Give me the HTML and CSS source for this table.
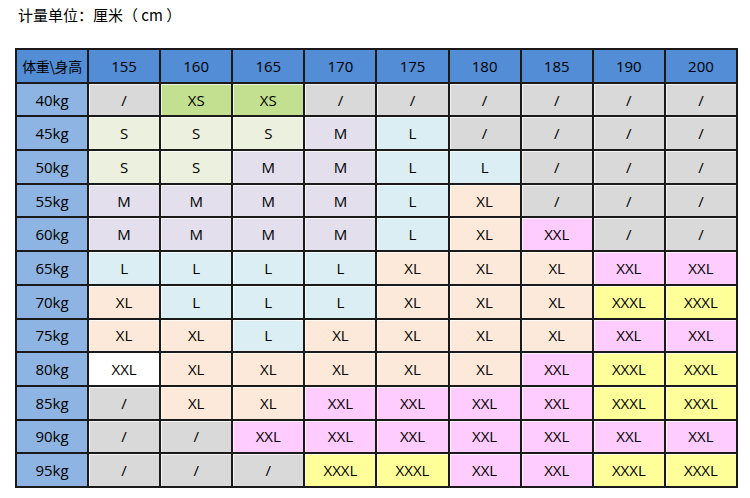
FILE: index.html
```html
<!DOCTYPE html>
<html lang="zh-CN">
<head>
<meta charset="utf-8">
<title>尺码表</title>
<link rel="stylesheet" href="styles.css">
</head>
<body>
<div class="page">
  <div class="unit">计量单位：厘米（ cm ）</div>
  <table class="size-table">
    <thead>
      <tr>
        <th class="corner">体重\身高</th>
        <th>155</th><th>160</th><th>165</th><th>170</th><th>175</th><th>180</th><th>185</th><th>190</th><th>200</th>
      </tr>
    </thead>
    <tbody>
      <tr><th>40kg</th><td class="na">/</td><td class="xs">XS</td><td class="xs">XS</td><td class="na">/</td><td class="na">/</td><td class="na">/</td><td class="na">/</td><td class="na">/</td><td class="na">/</td></tr>
      <tr><th>45kg</th><td class="s">S</td><td class="s">S</td><td class="s">S</td><td class="m">M</td><td class="l">L</td><td class="na">/</td><td class="na">/</td><td class="na">/</td><td class="na">/</td></tr>
      <tr><th>50kg</th><td class="s">S</td><td class="s">S</td><td class="m">M</td><td class="m">M</td><td class="l">L</td><td class="l">L</td><td class="na">/</td><td class="na">/</td><td class="na">/</td></tr>
      <tr><th>55kg</th><td class="m">M</td><td class="m">M</td><td class="m">M</td><td class="m">M</td><td class="l">L</td><td class="xl">XL</td><td class="na">/</td><td class="na">/</td><td class="na">/</td></tr>
      <tr><th>60kg</th><td class="m">M</td><td class="m">M</td><td class="m">M</td><td class="m">M</td><td class="l">L</td><td class="xl">XL</td><td class="xxl">XXL</td><td class="na">/</td><td class="na">/</td></tr>
      <tr><th>65kg</th><td class="l">L</td><td class="l">L</td><td class="l">L</td><td class="l">L</td><td class="xl">XL</td><td class="xl">XL</td><td class="xl">XL</td><td class="xxl">XXL</td><td class="xxl">XXL</td></tr>
      <tr><th>70kg</th><td class="xl">XL</td><td class="l">L</td><td class="l">L</td><td class="l">L</td><td class="xl">XL</td><td class="xl">XL</td><td class="xl">XL</td><td class="xxxl">XXXL</td><td class="xxxl">XXXL</td></tr>
      <tr><th>75kg</th><td class="xl">XL</td><td class="xl">XL</td><td class="l">L</td><td class="xl">XL</td><td class="xl">XL</td><td class="xl">XL</td><td class="xl">XL</td><td class="xxl">XXL</td><td class="xxl">XXL</td></tr>
      <tr><th>80kg</th><td class="blank">XXL</td><td class="xl">XL</td><td class="xl">XL</td><td class="xl">XL</td><td class="xl">XL</td><td class="xl">XL</td><td class="xxl">XXL</td><td class="xxxl">XXXL</td><td class="xxxl">XXXL</td></tr>
      <tr><th>85kg</th><td class="na">/</td><td class="xl">XL</td><td class="xl">XL</td><td class="xxl">XXL</td><td class="xxl">XXL</td><td class="xxl">XXL</td><td class="xxl">XXL</td><td class="xxxl">XXXL</td><td class="xxxl">XXXL</td></tr>
      <tr><th>90kg</th><td class="na">/</td><td class="na">/</td><td class="xxl">XXL</td><td class="xxl">XXL</td><td class="xxl">XXL</td><td class="xxl">XXL</td><td class="xxl">XXL</td><td class="xxl">XXL</td><td class="xxl">XXL</td></tr>
      <tr><th>95kg</th><td class="na">/</td><td class="na">/</td><td class="na">/</td><td class="xxxl">XXXL</td><td class="xxxl">XXXL</td><td class="xxl">XXL</td><td class="xxl">XXL</td><td class="xxxl">XXXL</td><td class="xxxl">XXXL</td></tr>
    </tbody>
  </table>
</div>
</body>
</html>
```

FILE: styles.css
```css
html, body {
  margin: 0;
  padding: 0;
  background: #ffffff;
}

.page {
  padding: 4px 0 0 15px;
  font-family: "Open Sans", "Noto Sans CJK SC", sans-serif;
  color: #000;
}

.unit {
  font-family: "Noto Sans CJK SC", sans-serif;
  font-size: 15px;
  line-height: 22px;
  padding-left: 3px;
  margin-bottom: 22px;
}

.size-table {
  border-collapse: separate;
  border-spacing: 0;
  border: 1px solid #1a1a1a;
  width: 723px;
  table-layout: fixed;
  font-size: 15px;
}

.size-table th,
.size-table td {
  border: 1px solid #1a1a1a;
  padding: 0;
  text-align: center;
  font-weight: normal;
  box-sizing: border-box;
  height: 33.7px;
}

.size-table td {
  box-shadow: inset 1px 1px 0 rgba(255, 255, 255, 0.7);
}

.size-table thead th {
  background: #538dd5;
}

.size-table th.corner {
  width: 72px;
  font-family: "Noto Sans CJK SC", sans-serif;
  font-size: 14px;
  letter-spacing: -0.4px;
  white-space: nowrap;
}

.size-table tbody th {
  background: #8db4e2;
}

.na   { background: #d9d9d9; }
.xs   { background: #c2e090; }
.s    { background: #ebf1de; }
.m    { background: #e4dfec; }
.l    { background: #daeef3; }
.xl   { background: #fde9d9; }
.xxl  { background: #ffccff; }
.xxxl { background: #ffff99; }
.blank { background: #ffffff; }
```
